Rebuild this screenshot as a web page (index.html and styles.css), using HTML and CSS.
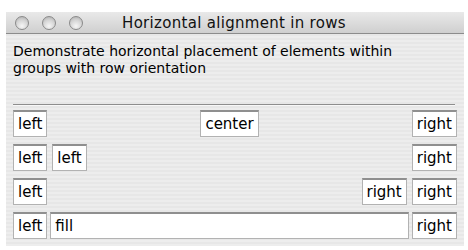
FILE: index.html
```html
<!doctype html>
<html>
<head>
<meta charset="utf-8">
<title>Horizontal alignment in rows</title>
<link rel="stylesheet" href="styles.css">
</head>
<body>
<div class="window">
	<div class="titlebar">
		<div class="lights">
			<span class="light"></span>
			<span class="light"></span>
			<span class="light"></span>
		</div>
		<div class="title">Horizontal alignment in rows</div>
	</div>
	<div class="content">
		<p class="desc">Demonstrate horizontal placement of elements within groups with row orientation</p>
		<div class="sep"></div>
		<div class="row spread">
			<span class="cell">left</span>
			<span class="cell">center</span>
			<span class="cell">right</span>
		</div>
		<div class="row">
			<span class="cell">left</span>
			<span class="cell">left</span>
			<span class="push"></span>
			<span class="cell">right</span>
		</div>
		<div class="row">
			<span class="cell">left</span>
			<span class="push"></span>
			<span class="cell">right</span>
			<span class="cell">right</span>
		</div>
		<div class="row tight">
			<span class="cell">left</span>
			<span class="cell fill">fill</span>
			<span class="cell">right</span>
		</div>
	</div>
</div>
</body>
</html>
```

FILE: styles.css
```css
body{
	margin:0;
	background:#fff;
	font-family:"DejaVu Sans","Noto Sans",sans-serif;
	color:#000;
}
.window{
	margin:12px 4px 0 6px;
	width:458px;
	height:234px;
	background:repeating-linear-gradient(#ededed 0,#ededed 2px,#e7e7e7 2px,#e7e7e7 4px);
}
.titlebar{
	height:21px;
	background:linear-gradient(#e9e9e9,#cfcfcf);
	border-bottom:1px solid #8c8c8c;
	display:flex;
	align-items:center;
}
.lights{
	display:flex;
	gap:13px;
	padding-left:9px;
}
.light{
	width:14px;
	height:14px;
	border-radius:50%;
	box-sizing:border-box;
	border:1px solid #8a8a8a;
	background:radial-gradient(circle at 50% 75%,#f6f6f6 0,#d4d4d4 55%,#a9a9a9 100%);
}
.title{
	flex:1;
	text-align:center;
	font-size:15px;
	letter-spacing:0.3px;
	padding-right:79px;
	color:#111;
}
.content{
	padding:0 7px;
}
.desc{
	margin:0;
	padding-top:9px;
	width:400px;
	font-size:14px;
	line-height:17px;
	height:50px;
}
.sep{
	border-top:1px solid #8e8e8e;
	border-bottom:1px solid #f8f8f8;
	margin:11px 2px 4px 0;
}
.row{
	display:flex;
	gap:5px;
	margin-bottom:7px;
}
.row.spread{
	justify-content:space-between;
}
.row.tight{
	gap:3px;
}
.push{
	flex:1;
}
.cell{
	box-sizing:border-box;
	height:27px;
	padding:0 4px;
	background:#fff;
	border:1px solid #b2b2b2;
	border-top:2px solid #8f8f8f;
	font-size:15px;
	line-height:24px;
}
.fill{
	flex:1;
}
```
